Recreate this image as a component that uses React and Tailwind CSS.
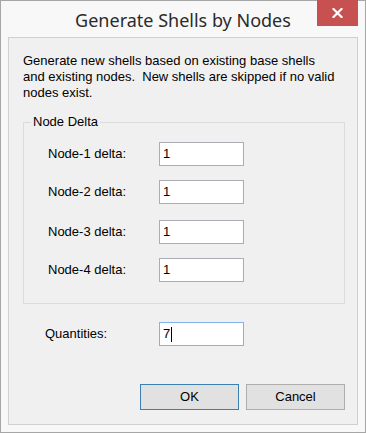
import React from "react";

const font = { fontFamily: '"Liberation Sans", Arial, sans-serif' };

function Row({ label, value, mt, labelW = "w-[135px]", labelPl = "pl-[24px]" }) {
  return (
    <div className={`flex items-center ${mt}`}>
      <div className={`${labelW} ${labelPl} text-[13px] text-black`}>{label}</div>
      <div className="w-[85px] h-[24px] border border-[#abadb3] bg-white flex items-center pl-[3px] text-[13px] text-black">
        {value}
      </div>
    </div>
  );
}

export default function App() {
  return (
    <div
      className="w-[366px] h-[433px] border border-[#a6a6a6] bg-[#f8f8f8] flex flex-col"
      style={font}
    >
      <div className="relative h-[36px] shrink-0 flex items-center justify-center">
        <div
          className="text-[18px] text-[#2b2b2b] pt-[3px]"
          style={{ fontFamily: '"Noto Sans", "Open Sans", sans-serif' }}
        >
          Generate Shells by Nodes
        </div>
        <div className="absolute top-[-1px] right-[7px] w-[41px] h-[26px] bg-[#c75050] flex items-center justify-center">
          <svg width="11" height="10" viewBox="0 0 11 10">
            <path d="M1.5 1 L9.5 9 M9.5 1 L1.5 9" stroke="white" strokeWidth="2.2" strokeLinecap="square" />
          </svg>
        </div>
      </div>
      <div className="mx-[7px] h-[388px] border border-[#d0d0d0] bg-[#f0f0f0] flex flex-col">
        <p className="pl-[14px] pt-[15px] text-[13px] leading-[16px] text-black">
          Generate new shells based on existing base shells
          <br />
          and existing nodes.&nbsp; New shells are skipped if no valid
          <br />
          nodes exist.
        </p>
        <fieldset className="mt-[13px] ml-[14px] w-[322px] h-[190px] border border-[#dcdcdc] px-0 pt-0 m-0">
          <legend className="ml-[7px] px-[2px] text-[13px] text-black leading-[16px]">Node Delta</legend>
          <Row label="Node-1 delta:" value="1" mt="mt-[12px]" />
          <Row label="Node-2 delta:" value="1" mt="mt-[14px]" />
          <Row label="Node-3 delta:" value="1" mt="mt-[16px]" />
          <Row label="Node-4 delta:" value="1" mt="mt-[14px]" />
        </fieldset>
        <div className="flex items-center mt-[18px]">
          <div className="w-[150px] pl-[36px] text-[13px] text-black">Quantities:</div>
          <div className="w-[85px] h-[24px] border border-[#7eb4ea] bg-white flex items-center pl-[3px] text-[13px] text-black">
            7<span className="inline-block w-[1px] h-[15px] bg-black ml-[1px]" />
          </div>
        </div>
        <div className="flex justify-end gap-[7px] mr-[12px] mt-[38px]">
          <button className="w-[99px] h-[26px] border border-[#3c7fb1] bg-[#e1e1e1] text-[13px] text-black" style={font}>
            OK
          </button>
          <button className="w-[99px] h-[26px] border border-[#adadad] bg-[#e1e1e1] text-[13px] text-black" style={font}>
            Cancel
          </button>
        </div>
      </div>
    </div>
  );
}
